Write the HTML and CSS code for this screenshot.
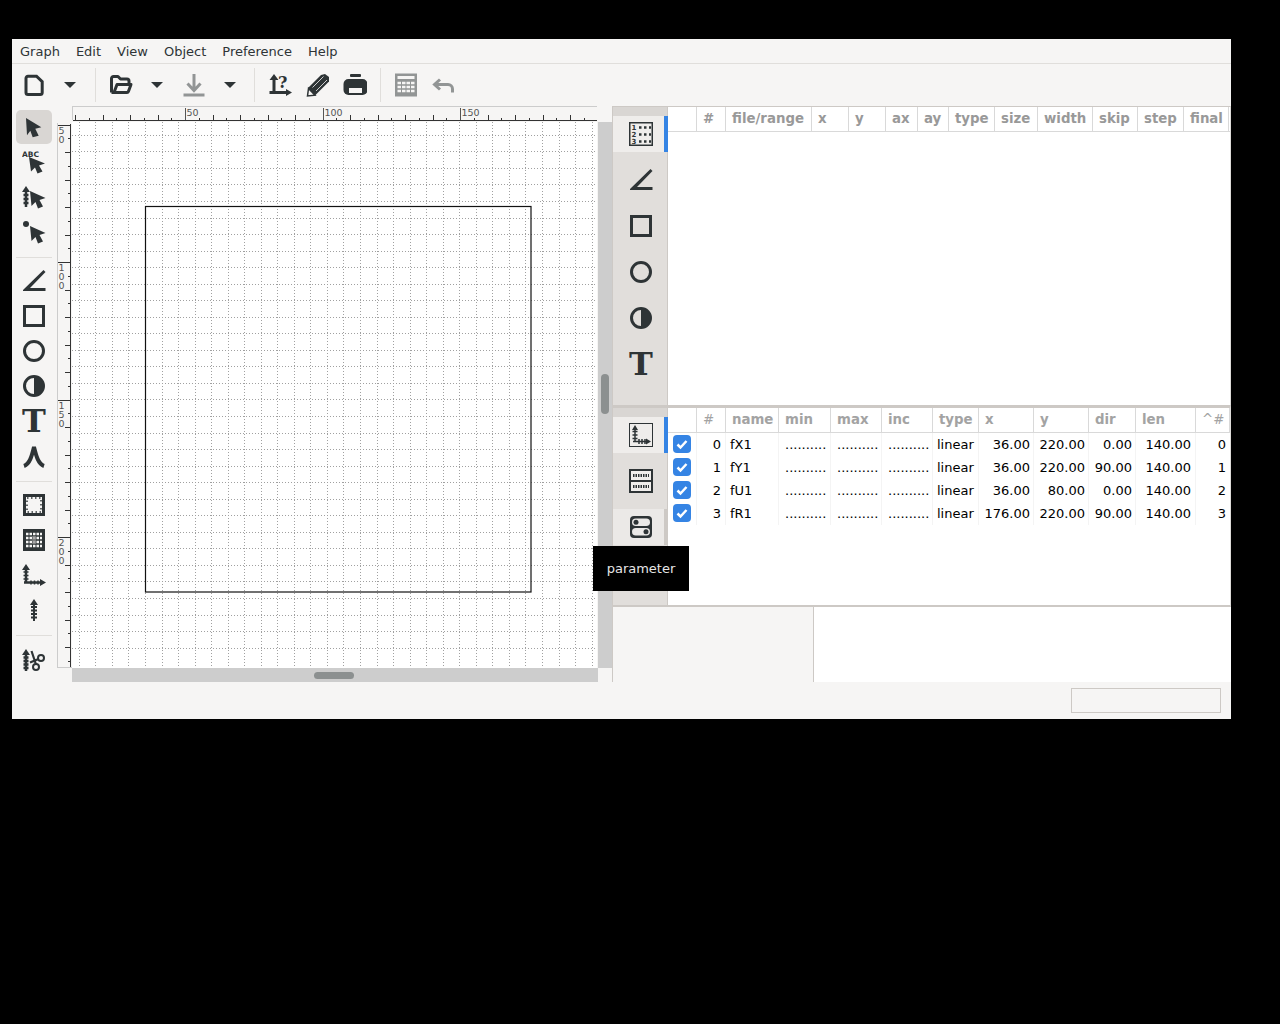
FILE: index.html
```html
<!DOCTYPE html>
<html lang="en">
<head>
    <meta charset="UTF-8">
    <title>Graph</title>
    <link rel="stylesheet" href="styles.css">
</head>
<body>
<svg class="sprite" xmlns="http://www.w3.org/2000/svg">
    <symbol id="i-new" viewBox="0 0 24 24"><path d="M6 3.200h8.500l5.700 5.500v10.800a2 2 0 0 1-2 2H6a2 2 0 0 1-2-2V5.200a2 2 0 0 1 2-2z" fill="none" stroke="currentColor" stroke-width="3"/></symbol>
    <symbol id="i-open" viewBox="0 0 24 24"><path d="M2.500 19.500V5.500a2 2 0 0 1 2-2H9l2.500 2.500H18a2 2 0 0 1 2 2v2M2.500 19.500H18a1.500 1.500 0 0 0 1.400-1l2.600-7H8l-3 8" fill="none" stroke="currentColor" stroke-width="3" stroke-linejoin="round"/></symbol>
    <symbol id="i-save" viewBox="0 0 24 24"><path d="M12 1v16M5.500 10.500l6.500 7 6.500-7" fill="none" stroke="currentColor" stroke-width="3"/><rect x="1.500" y="20.500" width="21" height="3" fill="currentColor"/></symbol>
    <symbol id="i-pencil" viewBox="0 0 24 24"><path d="M2 15L15 2l4-1 4 3v4.500L9 22.500z" fill="currentColor"/><path d="M2.500 15.500L1.500 23l7.500-.8z" fill="#f6f5f4" stroke="currentColor" stroke-width="1.500"/><path d="M6.500 14.500L17.500 3.500M10 18L21 7" stroke="#f6f5f4" stroke-width=".8"/></symbol>
    <symbol id="i-print" viewBox="0 0 24 24"><rect x="7" y="1" width="11" height="3" rx="1" fill="currentColor"/><rect x="0.500" y="6" width="24" height="16" rx="5" fill="currentColor"/><rect x="6" y="15" width="13" height="5" fill="#f6f5f4"/></symbol>
    <symbol id="i-calc" viewBox="0 0 24 24"><rect x="1" y="0.500" width="22" height="23" fill="currentColor"/><rect x="3.500" y="3" width="17" height="3" fill="#f6f5f4"/><path d="M3.500 10h17M3.500 14h17M3.500 18h17" stroke="#f6f5f4" stroke-width="2.500" stroke-dasharray="3.500 1"/></symbol>
    <symbol id="i-undo" viewBox="0 0 24 24"><path d="M9 6.500L3.500 11.500 9 16.500M3.500 11.500H17a4.500 4.500 0 0 1 4.500 4.500v3.500" fill="none" stroke="currentColor" stroke-width="3"/></symbol>

    <symbol id="i-pointer" viewBox="0 0 24 24"><path d="M4 3l15.300 9.300-6 1.400 3.400 7-6 1.600-2.400-6.600L5 20.300z" fill="currentColor"/></symbol>
    <symbol id="i-ptr-tick" viewBox="0 0 24 24"><path d="M4 5v17M1.500 10h5M1.500 14h5M1.500 18h5" stroke="currentColor" stroke-width="2.500" fill="none"/><path d="M4 1l4 6H0z" fill="currentColor"/><path d="M8 6l15.500 7-6 2 3.500 6.500-5 2-2.500-6.500-4 4z" fill="currentColor"/></symbol>
    <symbol id="i-ptr-dot" viewBox="0 0 24 24"><circle cx="4" cy="4" r="3" fill="currentColor"/><path d="M8 6l15.500 7-6 2 3.500 6.500-5 2-2.500-6.500-4 4z" fill="currentColor"/></symbol>
    <symbol id="i-angle" viewBox="0 0 24 24"><path d="M21.500 1l2 2L8 19h15.500v3H1v-1z" fill="currentColor"/></symbol>
    <symbol id="i-rect" viewBox="0 0 24 24"><rect x="2.500" y="2.500" width="19" height="19" fill="none" stroke="currentColor" stroke-width="3"/></symbol>
    <symbol id="i-circle" viewBox="0 0 24 24"><circle cx="12" cy="12" r="9.500" fill="none" stroke="currentColor" stroke-width="3"/></symbol>
    <symbol id="i-half" viewBox="0 0 24 24"><circle cx="12" cy="12" r="9.500" fill="none" stroke="currentColor" stroke-width="3"/><path d="M12 2.500a9.500 9.500 0 0 1 0 19z" fill="currentColor"/></symbol>
    <symbol id="i-lambda" viewBox="0 0 24 24"><path d="M2 22C8 20 10 11 12 3c2 8 4 17 10 19" fill="none" stroke="currentColor" stroke-width="4"/></symbol>
    <symbol id="i-frame" viewBox="0 0 24 24"><rect x="1" y="1" width="22" height="22" fill="currentColor"/><rect x="4" y="4" width="16" height="16" fill="#f6f5f4"/><rect x="5" y="5" width="14" height="14" fill="none" stroke="currentColor" stroke-width="1.500" stroke-dasharray="1.500 2.500"/></symbol>
    <symbol id="i-grid" viewBox="0 0 24 24"><rect x="1" y="1" width="22" height="22" fill="currentColor"/><path d="M4 6h16M4 10h16M4 14h16M4 18h16" stroke="#f6f5f4" stroke-width="2.500" stroke-dasharray="2.500 1"/><rect x="10" y="8" width="4" height="8" fill="#8c8c8c" opacity=".7"/></symbol>
    <symbol id="i-axes" viewBox="0 0 24 24"><path d="M4 6v14M2 19.500h17" stroke="currentColor" stroke-width="2.500" fill="none"/><path d="M1.500 9h5M1.500 12.500h5M1.500 16h5M9 17.500v4M12.500 17.500v4M16 17.500v4" stroke="currentColor" stroke-width="1.500" fill="none"/><path d="M4 1l4 6H0zM24 19.500L18 16v7z" fill="currentColor"/></symbol>
    <symbol id="i-tick" viewBox="0 0 24 24"><path d="M12 5v18M9 9h6M9 12.500h6M9 16h6M9 19.500h6" stroke="currentColor" stroke-width="2" fill="none"/><path d="M12 1l4 6H8z" fill="currentColor"/></symbol>
    <symbol id="i-cut" viewBox="0 0 24 24"><path d="M4 6v17M1.500 9.500h5M1.500 13h5M1.500 16.500h5M1.500 20h5" stroke="currentColor" stroke-width="2.500" fill="none"/><path d="M4 1l4 6H0z" fill="currentColor"/><circle cx="19" cy="10" r="3" fill="none" stroke="currentColor" stroke-width="2"/><circle cx="14" cy="19" r="3" fill="none" stroke="currentColor" stroke-width="2"/><path d="M9.500 3l4.500 13.500M8 14.500l8.500-3.500" stroke="currentColor" stroke-width="2.200"/></symbol>

    <symbol id="i-tab-axis" viewBox="0 0 24 24"><rect x="0.500" y="0.500" width="23" height="23" fill="none" stroke="currentColor"/><path d="M6 6v13M3.500 8.500h5M3.500 12h5M3.500 15.500h5M4 18.500h14M10 16v5M13 16v5M16 16v5" stroke="currentColor" stroke-width="1.500" fill="none"/><path d="M6 2l3 5H3zM22 18.500L17 15.500v6z" fill="currentColor"/></symbol>
    <symbol id="i-tab-rows" viewBox="0 0 24 24"><rect x="1" y="1" width="22" height="22" fill="#f0eeec" stroke="currentColor" stroke-width="2"/><path d="M1 12h22" stroke="currentColor" stroke-width="2"/><path d="M4 6.500h16M4 17.500h16" stroke="currentColor" stroke-width="3" stroke-dasharray="1.500 1"/></symbol>
    <symbol id="i-tab-param" viewBox="0 0 24 24"><rect x="1" y="1" width="22" height="22" rx="4" fill="currentColor"/><rect x="3" y="3.500" width="18" height="7.500" rx="3.750" fill="#ebe9e7"/><rect x="3" y="13" width="18" height="7.500" rx="3.750" fill="#ebe9e7"/><circle cx="7" cy="7.250" r="2.500" fill="currentColor"/><circle cx="17" cy="16.750" r="2.500" fill="currentColor"/></symbol>
    <symbol id="i-check" viewBox="0 0 18 18"><path d="M4.500 9.500l3 3 6-6.500" fill="none" stroke="#fff" stroke-width="2.500"/></symbol>
</svg>

<div class="window">
    <nav class="menubar">
        <span class="menu-item">Graph</span>
        <span class="menu-item">Edit</span>
        <span class="menu-item">View</span>
        <span class="menu-item">Object</span>
        <span class="menu-item">Preference</span>
        <span class="menu-item">Help</span>
    </nav>

    <div class="toolbar">
        <span class="tbtn"><svg class="icon"><use href="#i-new"/></svg></span>
        <span class="tbtn"><i class="caret"></i></span>
        <span class="tsep"></span>
        <span class="tbtn"><svg class="icon"><use href="#i-open"/></svg></span>
        <span class="tbtn"><i class="caret"></i></span>
        <span class="tbtn off"><svg class="icon"><use href="#i-save"/></svg></span>
        <span class="tbtn"><i class="caret"></i></span>
        <span class="tsep"></span>
        <span class="tbtn">
            <svg class="icon" viewBox="0 0 24 24"><path d="M6 5v15.500M1.500 19.500H19" fill="none" stroke="currentColor" stroke-width="3"/><path d="M6 1l4.500 6h-9zM24 19.500L18 16v7z" fill="currentColor"/><text x="10" y="15" class="icon-q">?</text></svg>
        </span>
        <span class="tbtn"><svg class="icon"><use href="#i-pencil"/></svg></span>
        <span class="tbtn"><svg class="icon"><use href="#i-print"/></svg></span>
        <span class="tsep"></span>
        <span class="tbtn off"><svg class="icon"><use href="#i-calc"/></svg></span>
        <span class="tbtn off"><svg class="icon"><use href="#i-undo"/></svg></span>
    </div>

    <div class="main">
        <div class="tools">
            <span class="tool active"><svg class="icon"><use href="#i-pointer"/></svg></span>
            <span class="tool">
                <svg class="icon" viewBox="0 0 24 24"><text x="0" y="7" class="icon-abc">ABC</text><path d="M7 7l16 6.500-6 2 3.500 6-5 2-2.500-6-4 4z" fill="currentColor"/></svg>
            </span>
            <span class="tool"><svg class="icon"><use href="#i-ptr-tick"/></svg></span>
            <span class="tool"><svg class="icon"><use href="#i-ptr-dot"/></svg></span>
            <span class="tool-sep"></span>
            <span class="tool"><svg class="icon"><use href="#i-angle"/></svg></span>
            <span class="tool"><svg class="icon"><use href="#i-rect"/></svg></span>
            <span class="tool"><svg class="icon"><use href="#i-circle"/></svg></span>
            <span class="tool"><svg class="icon"><use href="#i-half"/></svg></span>
            <span class="tool"><span class="glyph-t">T</span></span>
            <span class="tool"><svg class="icon"><use href="#i-lambda"/></svg></span>
            <span class="tool-sep"></span>
            <span class="tool"><svg class="icon"><use href="#i-frame"/></svg></span>
            <span class="tool"><svg class="icon"><use href="#i-grid"/></svg></span>
            <span class="tool"><svg class="icon"><use href="#i-axes"/></svg></span>
            <span class="tool"><svg class="icon"><use href="#i-tick"/></svg></span>
            <span class="tool-sep wide"></span>
            <span class="tool"><svg class="icon"><use href="#i-cut"/></svg></span>
        </div>

        <div class="graph">
            <svg id="ruler-top" class="ruler-top" width="525" height="16"></svg>
            <svg id="ruler-left" class="ruler-left" width="15" height="546"></svg>
            <svg id="canvas" class="canvas" width="525" height="546"></svg>
            <div class="vscroll"><i></i></div>
            <div class="hscroll"><i></i></div>
        </div>

        <div class="side">
            <section class="pane pane-data">
                <div class="tabs">
                    <span class="tab active">
                        <svg class="icon" viewBox="0 0 24 24"><rect x="0.750" y="0.750" width="22.500" height="22.500" fill="none" stroke="currentColor" stroke-width="1.500"/><text x="2.500" y="8" class="icon-num">1</text><text x="2.500" y="15" class="icon-num">2</text><text x="2.500" y="22" class="icon-num">3</text><path d="M10 5.500h12M10 12.500h12M10 19.500h12" stroke="currentColor" stroke-width="2.500" stroke-dasharray="2.500 2.500"/></svg>
                    </span>
                    <span class="tab"><svg class="icon"><use href="#i-angle"/></svg></span>
                    <span class="tab"><svg class="icon"><use href="#i-rect"/></svg></span>
                    <span class="tab"><svg class="icon"><use href="#i-circle"/></svg></span>
                    <span class="tab"><svg class="icon"><use href="#i-half"/></svg></span>
                    <span class="tab"><span class="glyph-t">T</span></span>
                </div>
                <div class="list">
                    <div class="head cols-data">
                        <span></span><span>#</span><span>file/range</span><span>x</span><span>y</span><span>ax</span><span>ay</span><span>type</span><span>size</span><span>width</span><span>skip</span><span>step</span><span>final</span>
                    </div>
                </div>
            </section>

            <section class="pane pane-axis">
                <div class="tabs">
                    <span class="tab active"><svg class="icon"><use href="#i-tab-axis"/></svg></span>
                    <span class="tab"><svg class="icon"><use href="#i-tab-rows"/></svg></span>
                    <span class="tab hover"><svg class="icon"><use href="#i-tab-param"/></svg></span>
                </div>
                <div class="list">
                    <div class="head cols-axis">
                        <span></span><span class="thin">#</span><span>name</span><span>min</span><span>max</span><span>inc</span><span>type</span><span>x</span><span>y</span><span>dir</span><span>len</span><span class="thin">^#</span>
                    </div>
                    <div class="row cols-axis">
                        <span><svg class="check"><use href="#i-check"/></svg></span><span class="num">0</span><span>fX1</span><span>..........</span><span>..........</span><span>..........</span><span class="type">linear</span><span class="num">36.00</span><span class="num">220.00</span><span class="num">0.00</span><span class="num">140.00</span><span class="num">0</span>
                    </div>
                    <div class="row cols-axis">
                        <span><svg class="check"><use href="#i-check"/></svg></span><span class="num">1</span><span>fY1</span><span>..........</span><span>..........</span><span>..........</span><span class="type">linear</span><span class="num">36.00</span><span class="num">220.00</span><span class="num">90.00</span><span class="num">140.00</span><span class="num">1</span>
                    </div>
                    <div class="row cols-axis">
                        <span><svg class="check"><use href="#i-check"/></svg></span><span class="num">2</span><span>fU1</span><span>..........</span><span>..........</span><span>..........</span><span class="type">linear</span><span class="num">36.00</span><span class="num">80.00</span><span class="num">0.00</span><span class="num">140.00</span><span class="num">2</span>
                    </div>
                    <div class="row cols-axis">
                        <span><svg class="check"><use href="#i-check"/></svg></span><span class="num">3</span><span>fR1</span><span>..........</span><span>..........</span><span>..........</span><span class="type">linear</span><span class="num">176.00</span><span class="num">220.00</span><span class="num">90.00</span><span class="num">140.00</span><span class="num">3</span>
                    </div>
                </div>
            </section>

            <section class="pane-info">
                <div class="info-left"></div>
                <div class="info-right"></div>
            </section>
        </div>
    </div>

    <div class="status"><span class="status-box"></span></div>

    <div class="tooltip">parameter</div>
</div>
<script src="graph.js"></script>
</body>
</html>
```

FILE: styles.css
```css
html, body {
    margin: 0;
    padding: 0;
    height: 100%;
    background-color: #000;
    font-family: "DejaVu Sans", sans-serif;
    font-size: 13px;
    overflow: hidden;
}

.sprite {
    position: absolute;
    width: 0;
    height: 0;
}

.window {
    position: relative;
    display: flex;
    flex-direction: column;
    width: 1219px;
    height: 680px;
    margin: 39px 0 0 12px;
    background-color: #f6f5f4;
    color: #2e3436;
}

.icon {
    display: block;
    width: 24px;
    height: 24px;
}

.icon-q {
    font: bold 16px "DejaVu Serif", serif;
    fill: currentColor;
}

.icon-abc {
    font: bold 7.500px "DejaVu Sans", sans-serif;
    fill: currentColor;
}

.icon-num {
    font: bold 7px "DejaVu Sans", sans-serif;
    fill: currentColor;
}

.glyph-t {
    display: block;
    width: 24px;
    height: 24px;
    font: bold 32px/24px "DejaVu Serif", serif;
    text-align: center;
}

/* menu and toolbar */
.menubar {
    display: flex;
    height: 24px;
    border-bottom: 1px solid #e0dedb;
    align-items: center;
}

.menu-item {
    padding: 0 8px;
}

.toolbar {
    display: grid;
    grid-template-columns: 36px 36px 15px 36px 36px 38px 34px 15px 36px 40px 34px 16px 36px 38px;
    height: 42px;
    padding-left: 4px;
    align-items: center;
}

.tbtn {
    display: flex;
    justify-content: center;
    align-items: center;
    height: 42px;
}

.tbtn.off {
    color: #929595;
}

.caret {
    display: block;
    width: 0;
    height: 0;
    border-left: 6px solid transparent;
    border-right: 6px solid transparent;
    border-top: 6px solid #2e3436;
}

.tsep {
    justify-self: center;
    width: 1px;
    height: 34px;
    background-color: #e0dedb;
}

/* main area */
.main {
    display: flex;
    height: 576px;
}

.tools {
    display: flex;
    flex-direction: column;
    flex: none;
    width: 45px;
    padding: 4px 0 0 4px;
    box-sizing: border-box;
}

.tool {
    display: flex;
    justify-content: center;
    flex: none;
    width: 36px;
    height: 35px;
    padding-top: 5px;
    box-sizing: border-box;
    border-radius: 5px;
}

.tool.active {
    background-color: #d9d6d3;
    height: 34px;
    margin-bottom: 1px;
}

.tool-sep {
    flex: none;
    width: 36px;
    height: 14px;
    background: linear-gradient(#e0dedb, #e0dedb) center / 100% 1px no-repeat;
}

.tool-sep.wide {
    height: 15px;
}

/* graph canvas */
.graph {
    display: grid;
    grid-template-columns: 15px 525px 1px 14px;
    grid-template-rows: 16px 546px 14px;
    flex: none;
    width: 555px;
}

.ruler-top {
    grid-column: 2;
    grid-row: 1;
    display: block;
}

.ruler-left {
    grid-column: 1;
    grid-row: 2;
    display: block;
}

.canvas {
    grid-column: 2;
    grid-row: 2;
    display: block;
    background-color: #fff;
}

.ruler-text {
    font: 9.500px "DejaVu Sans", sans-serif;
    fill: #555;
}

.vscroll {
    grid-column: 4;
    grid-row: 2;
    position: relative;
    background-color: #cdcdcd;
}

.vscroll i {
    position: absolute;
    left: 3px;
    top: 252px;
    width: 8px;
    height: 40px;
    border-radius: 4px;
    background-color: #8c9090;
}

.hscroll {
    grid-column: 2 / 4;
    grid-row: 3;
    position: relative;
    background-color: #cdcdcd;
}

.hscroll i {
    position: absolute;
    left: 242px;
    top: 4px;
    width: 40px;
    height: 7px;
    border-radius: 4px;
    background-color: #8c9090;
}

/* right side panes */
.side {
    display: flex;
    flex-direction: column;
    flex: none;
    width: 619px;
    border-left: 1px solid #cdc9c5;
    box-sizing: border-box;
}

.pane {
    display: flex;
    border-right: 1px solid #dedcd9;
}

.pane-data {
    height: 299px;
    border-top: 1px solid #cdc9c5;
    box-sizing: border-box;
}

.pane-axis {
    height: 202px;
    border-top: 3px solid #cdc9c5;
    border-bottom: 2px solid #cdc9c5;
    box-sizing: border-box;
}

.tabs {
    display: flex;
    flex-direction: column;
    gap: 10px;
    flex: none;
    width: 55px;
    padding-top: 9px;
    box-sizing: border-box;
    background: linear-gradient(#d9d6d3 9px, #e1dedb 9px);
    box-shadow: inset -1px 0 0 #cdc9c5;
}

.tab {
    display: flex;
    justify-content: center;
    align-items: center;
    height: 36px;
    padding-left: 1px;
    box-sizing: border-box;
}

.tab.active {
    background-color: #efedeb;
    box-shadow: inset -4px 0 0 #3584e4;
}

.tab.hover {
    background-color: #ebe9e7;
    box-shadow: inset -4px 0 0 #cdc9c5;
}

.list {
    flex: 1;
    background-color: #fff;
    overflow: hidden;
}

.cols-data {
    display: grid;
    grid-template-columns: 29px 29px 86px 37px 37px 32px 31px 46px 43px 55px 45px 46px 45px;
}

.cols-axis {
    display: grid;
    grid-template-columns: 29px 29px 53px 52px 51px 51px 46px 55px 55px 47px 60px 34px;
}

.head {
    height: 25px;
    box-sizing: border-box;
    border-bottom: 1px solid #d9d9d9;
    font-size: 13.330px;
    font-weight: bold;
    color: #999;
}

.head span {
    padding-left: 6px;
    line-height: 23px;
    border-right: 1px solid #d9d9d9;
    overflow: hidden;
    white-space: nowrap;
}

.head .thin {
    font-weight: normal;
    color: #aaa;
}

.pane-axis .head span {
    color: #a3a3a3;
}

.row {
    height: 23px;
    color: #000;
}

.row span {
    padding-left: 4px;
    line-height: 23px;
    border-right: 1px solid #f4f4f4;
    white-space: nowrap;
    overflow: hidden;
}

.row span:nth-child(n+4):nth-child(-n+6) {
    padding-left: 6px;
}

.row span.type {
    padding-left: 4px;
}

.row span.num {
    padding: 0 4px 0 0;
    text-align: right;
}

.row span.num:nth-child(n+8):nth-child(-n+10) {
    padding-right: 3px;
}

.row span:last-child {
    border-right: none;
}

.check {
    display: block;
    width: 18px;
    height: 18px;
    margin: 2px 0 0 1px;
    border-radius: 4px;
    background-color: #3584e4;
}

.pane-info {
    display: flex;
    height: 75px;
}

.info-left {
    flex: none;
    width: 200px;
    border-right: 1px solid #cdc9c5;
}

.info-right {
    flex: 1;
    background-color: #fff;
}

/* status bar */
.status {
    display: flex;
    justify-content: flex-end;
    height: 37px;
    padding: 6px 10px 0 0;
    box-sizing: border-box;
}

.status-box {
    width: 150px;
    height: 25px;
    box-sizing: border-box;
    border: 1px solid #cdc9c5;
}

.tooltip {
    position: absolute;
    left: 581px;
    top: 507px;
    width: 96px;
    height: 45px;
    line-height: 45px;
    text-align: center;
    background-color: #000;
    color: #e6e6e6;
}
```

FILE: graph.js
```js
const NS = 'http://www.w3.org/2000/svg';

function add(parent, name, attrs, text) {
    const el = document.createElementNS(NS, name);
    for (const key in attrs) el.setAttribute(key, attrs[key]);
    if (text) el.textContent = text;
    parent.appendChild(el);
    return el;
}

function line(parent, x1, y1, x2, y2, stroke, extra) {
    return add(parent, 'line', Object.assign({x1, y1, x2, y2, stroke, 'shape-rendering': 'crispEdges'}, extra));
}

// canvas starts at 72,122 on screen
const canvas = document.getElementById('canvas');
const dots = {'stroke-dasharray': '1 2'};
for (let n = -4; n < 28; n++) {
    const x = Math.round(145 + n * 16.54) - 72 + 0.5;
    if (x > 0 && x < 525) line(canvas, x, 0, x, 546, '#a0a0a0', dots);
}
for (let n = -5; n < 28; n++) {
    const y = Math.round(201 + n * 16.54) - 122 + 0.5;
    if (y > 0 && y < 546) line(canvas, 0, y, 525, y, '#a0a0a0', dots);
}
add(canvas, 'rect', {x: 73.5, y: 84.5, width: 385.5, height: 385.5, fill: 'none', stroke: '#111', 'stroke-width': 1.2});

// top ruler starts at 72,106
const top_ = document.getElementById('ruler-top');
line(top_, 0, 0.5, 525, 0.5, '#ccc');
line(top_, 0.5, 0, 0.5, 14, '#ccc');
line(top_, 1, 14.5, 525, 14.5, '#333');
for (let n = 2; n < 40; n++) {
    const x = Math.round(47.5 + n * 13.75) - 72 + 0.5;
    const long = n % 10 === 0;
    const y = long ? 2 : (n % 2 === 0 ? 9 : 12);
    line(top_, x, y, x, 14, long ? '#555' : '#333');
    if (long) add(top_, 'text', {x: x + 1, y: 10, class: 'ruler-text'}, String(n * 5));
}

// left ruler starts at 57,122
const left = document.getElementById('ruler-left');
line(left, 0.5, 1, 0.5, 546, '#ccc');
line(left, 0, 545.5, 15, 545.5, '#ccc');
line(left, 13.5, 2, 13.5, 545, '#333');
for (let n = 0; n < 40; n++) {
    const y = Math.round(124.5 + n * 13.75) - 122 + 0.5;
    const long = n % 10 === 0;
    const x = long ? 1 : (n % 2 === 0 ? 8 : 11);
    line(left, x, y, 14, y, '#333');
    if (long) {
        String(50 + n * 5).split('').forEach((ch, i) => {
            add(left, 'text', {x: 1.5, y: y + 8 + i * 9.4, class: 'ruler-text'}, ch);
        });
    }
}
```
